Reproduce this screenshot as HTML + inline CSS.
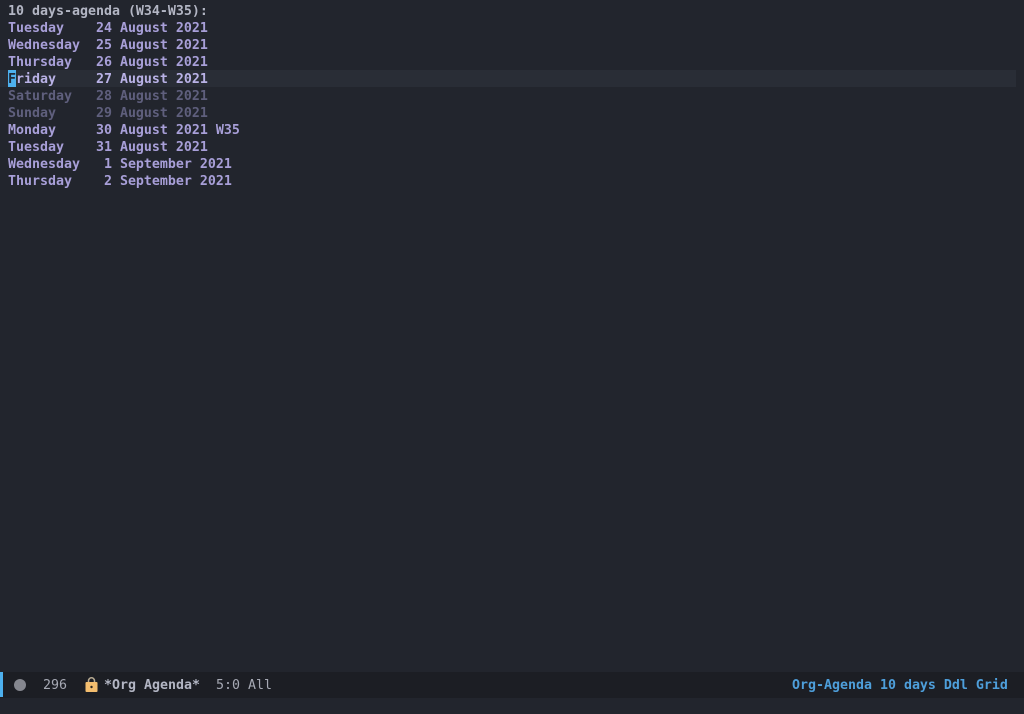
<!DOCTYPE html>
<html>
<head>
<meta charset="utf-8">
<style>
html,body{margin:0;padding:0;width:1024px;height:714px;overflow:hidden;background:#22252d}
body{position:relative;font-family:"DejaVu Sans Mono","Liberation Mono",monospace;font-size:13.29px;font-weight:bold;color:#a89fd8}
.l{position:absolute;left:8px;height:17px;line-height:17px;white-space:pre;letter-spacing:0}
.hd{color:#b3b6c4}
.we{color:#5f5f7d}
.hl{position:absolute;left:0;top:70px;width:1016px;height:17px;background:#292d36}
.cur{position:absolute;left:8px;top:70px;width:8px;height:17px;background:#4db0ee}
.ml{position:absolute;left:0;top:672px;width:1024px;height:26px;background:#1c1e24}
.bar{position:absolute;left:0;top:672px;width:3px;height:25px;background:#4db0ee}
.dot{position:absolute;left:14px;top:679px;width:12px;height:12px;border-radius:50%;background:#85878f}
.m{position:absolute;top:677px;height:17px;line-height:17px;white-space:pre;color:#b3b6c4}
.n{font-weight:normal;color:#a6a9b4}
</style>
</head>
<body>
<div class="hl"></div>
<div class="cur"></div>
<div class="l hd" style="top:3px">10 days-agenda (W34-W35):</div>
<div class="l" style="top:20px">Tuesday    24 August 2021</div>
<div class="l" style="top:37px">Wednesday  25 August 2021</div>
<div class="l" style="top:54px">Thursday   26 August 2021</div>
<div class="l" style="top:71px"><span style="color:#1f2a3a">F</span><span style="color:#b9b2e6">riday     27 August 2021</span></div>
<div class="l we" style="top:88px">Saturday   28 August 2021</div>
<div class="l we" style="top:105px">Sunday     29 August 2021</div>
<div class="l" style="top:122px">Monday     30 August 2021 W35</div>
<div class="l" style="top:139px">Tuesday    31 August 2021</div>
<div class="l" style="top:156px">Wednesday   1 September 2021</div>
<div class="l" style="top:173px">Thursday    2 September 2021</div>
<div class="ml"></div>
<div class="bar"></div>
<div class="dot"></div>
<div class="m n" style="left:43px">296</div>
<svg style="position:absolute;left:85px;top:677px" width="13" height="15" viewBox="0 0 13 15">
<path d="M3.5 6V3.8a3 3 0 0 1 6 0V6" fill="none" stroke="#b8ab93" stroke-width="1.5"/>
<rect x="0.5" y="5" width="12" height="10" rx="1" fill="#f3bd6e"/>
<circle cx="6.5" cy="10" r="1.2" fill="#2a2520"/>
</svg>
<div class="m" style="left:104px">*Org Agenda*</div>
<div class="m n" style="left:216px">5:0 All</div>
<div class="m" style="left:792px;color:#4e9fdb">Org-Agenda 10 days Ddl Grid</div>
</body>
</html>
